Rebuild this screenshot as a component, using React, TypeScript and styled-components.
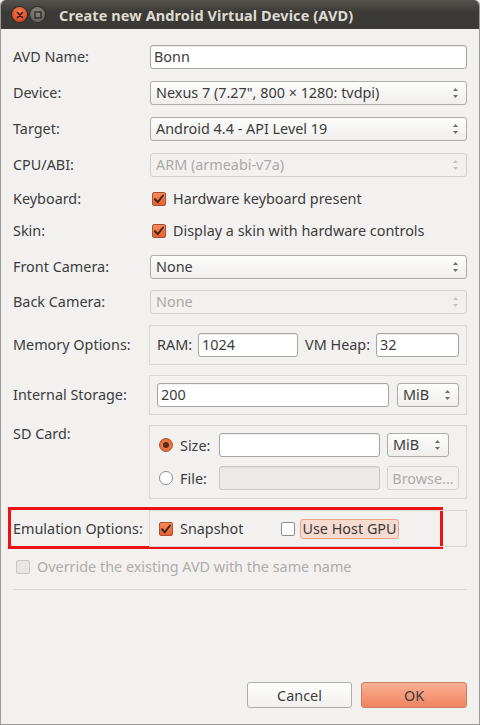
import React from "react";
import styled, { createGlobalStyle, css } from "styled-components";

const Global = createGlobalStyle`
  html, body { margin: 0; padding: 0; background: #f2f1f0; }
  body { font-family: "Noto Sans", "DejaVu Sans", sans-serif; font-size: 14.4px; color: #3c3c3c; }
  * { box-sizing: border-box; }
`;

const Window = styled.div`
  width: 480px;
  height: 725px;
  display: flex;
  flex-direction: column;
  background: #f2f1f0;
  border: 1px solid #9b9a96;
  border-top: none;
  border-radius: 5px 5px 0 0;
  overflow: hidden;
`;

const TitleBar = styled.div`
  height: 29px;
  flex: none;
  display: flex;
  align-items: center;
  padding-left: 11px;
  background: linear-gradient(#55534e, #3c3b37 40%, #3a3935);
  border-radius: 5px 5px 0 0;
`;

const WinButton = styled.div<{ $close?: boolean }>`
  width: 15px;
  height: 15px;
  border-radius: 50%;
  margin-right: 3px;
  display: flex;
  align-items: center;
  justify-content: center;
  ${(p) =>
    p.$close
      ? css`
          background: radial-gradient(circle at 50% 35%, #f7845e, #e0502a 60%, #c43f1c);
          box-shadow: 0 0 0 1px #2e2d2a;
        `
      : css`
          background: radial-gradient(circle at 50% 35%, #8a8882, #6c6a64 60%, #5d5b56);
          box-shadow: 0 0 0 1px #2e2d2a;
        `}
`;

const Title = styled.div`
  margin-left: 11px;
  color: #dfdbd2;
  font-weight: bold;
  font-size: 14.5px;
  letter-spacing: 0.1px;
`;

const Body = styled.div`
  flex: 1;
  display: flex;
  flex-direction: column;
  padding: 16px 12px 16px 12px;
`;

const Row = styled.div<{ $h: number; $mt?: number; $top?: boolean }>`
  display: grid;
  grid-template-columns: 136px 1fr;
  height: ${(p) => p.$h}px;
  margin-top: ${(p) => p.$mt ?? 0}px;
  align-items: ${(p) => (p.$top ? "start" : "center")};
`;

const Label = styled.div`
  line-height: 18px;
  white-space: nowrap;
`;

const Field = styled.div<{ $indent?: number }>`
  display: flex;
  align-items: center;
  height: 100%;
  padding-left: ${(p) => p.$indent ?? 0}px;
`;

const TextBox = styled.div<{ $w?: number; $disabled?: boolean; $ml?: number }>`
  height: 24px;
  ${(p) => (p.$w ? css`width: ${p.$w}px; flex: none;` : css`flex: 1;`)}
  margin-left: ${(p) => p.$ml ?? 0}px;
  border: 1px solid #a6a5a2;
  border-radius: 3px;
  background: ${(p) => (p.$disabled ? "#ebeae8" : "#ffffff")};
  ${(p) => p.$disabled && css`border-color: #c9c7c4;`}
  box-shadow: inset 0 1px 1px rgba(0, 0, 0, 0.06);
  padding: 0 4px 0 3px;
  display: flex;
  align-items: center;
  line-height: 18px;
  white-space: nowrap;
`;

const Combo = styled.div<{ $w?: number; $disabled?: boolean; $ml?: number }>`
  height: 24px;
  ${(p) => (p.$w ? css`width: ${p.$w}px; flex: none;` : css`flex: 1;`)}
  border: 1px solid ${(p) => (p.$disabled ? "#d3d1ce" : "#aeada9")};
  border-radius: 3px;
  background: ${(p) => (p.$disabled ? "#f2f1f0" : "linear-gradient(#fdfdfc, #efeeec)")};
  color: ${(p) => (p.$disabled ? "#aba9a6" : "#3c3c3c")};
  padding: 0 7px 0 5px;
  display: flex;
  align-items: center;
  justify-content: space-between;
  line-height: 18px;
  white-space: nowrap;
  margin-left: ${(p) => p.$ml ?? 1}px;
`;

const Group = styled.div<{ $gap?: number }>`
  border: 1px solid #dad8d4;
  height: 100%;
  padding: 0 7px;
  display: flex;
  align-items: center;
  gap: ${(p) => p.$gap ?? 6}px;
`;

const GroupGrid = styled.div`
  border: 1px solid #dad8d4;
  height: 100%;
  padding: 7px 7px 0 7px;
  display: grid;
  grid-template-columns: 54px 161px auto;
  grid-auto-rows: 24px;
  column-gap: 8px;
  row-gap: 9px;
  align-items: center;
`;

const Inline = styled.span<{ $ml?: number }>`
  white-space: nowrap;
  margin-left: ${(p) => p.$ml ?? 0}px;
  line-height: 18px;
`;

const CheckWrap = styled.label<{ $disabled?: boolean; $ml?: number }>`
  display: flex;
  align-items: center;
  gap: 7px;
  margin-left: ${(p) => p.$ml ?? 0}px;
  color: ${(p) => (p.$disabled ? "#aeaca9" : "#3c3c3c")};
  white-space: nowrap;
  line-height: 18px;
`;

const Box = styled.span<{ $checked?: boolean; $disabled?: boolean }>`
  width: 14px;
  height: 14px;
  flex: none;
  border-radius: 2px;
  display: inline-flex;
  align-items: center;
  justify-content: center;
  ${(p) =>
    p.$checked
      ? css`
          background: linear-gradient(#f58a5c, #e2622f);
          border: 1px solid #a9502c;
        `
      : p.$disabled
      ? css`
          background: #e8e7e5;
          border: 1px solid #c9c7c4;
        `
      : css`
          background: #ffffff;
          border: 1px solid #8e8c88;
        `}
`;

const Radio = styled.span<{ $checked?: boolean }>`
  width: 14px;
  height: 14px;
  flex: none;
  border-radius: 50%;
  display: inline-flex;
  align-items: center;
  justify-content: center;
  ${(p) =>
    p.$checked
      ? css`
          background: radial-gradient(circle, #f58a5c, #e0602e);
          border: 1px solid #b0532d;
        `
      : css`
          background: #ffffff;
          border: 1px solid #8e8c88;
        `}
`;

const Dot = styled.span`
  width: 6px;
  height: 6px;
  border-radius: 50%;
  background: #5a2a14;
`;

const RadioCell = styled.div`
  display: flex;
  align-items: center;
  gap: 7px;
  padding-left: 2px;
  white-space: nowrap;
`;

const FocusLabel = styled.span`
  border: 1px solid #eaa386;
  background: #f6dbd0;
  border-radius: 3px;
  padding: 0 1px;
  line-height: 18px;
  margin-left: -2px;
`;

const PushButton = styled.div<{ $w: number; $variant: "normal" | "primary" | "disabled"; $ml?: number }>`
  width: ${(p) => p.$w}px;
  height: ${(p) => (p.$variant === "disabled" ? 24 : 26)}px;
  flex: none;
  margin-left: ${(p) => p.$ml ?? 0}px;
  border-radius: 3px;
  display: flex;
  align-items: center;
  justify-content: center;
  white-space: nowrap;
  ${(p) =>
    p.$variant === "primary"
      ? css`
          background: linear-gradient(#fbb092, #f08462);
          border: 1px solid #c97f62;
        `
      : p.$variant === "disabled"
      ? css`
          background: #f2f1f0;
          border: 1px solid #d6d4d1;
          color: #aeaca9;
        `
      : css`
          background: linear-gradient(#ffffff, #f1f0ee);
          border: 1px solid #b0aeab;
        `}
`;

const Override = styled.div`
  margin-top: 9px;
  padding-left: 3px;
`;

const Separator = styled.div`
  margin-top: 13px;
  height: 1px;
  background: #d9d7d3;
`;

const Footer = styled.div`
  margin-top: auto;
  display: flex;
  justify-content: flex-end;
  gap: 9px;
`;

const Highlight = styled.div`
  margin-top: 8px;
  margin-left: -5px;
  margin-right: 24px;
  border: 3px solid #ee1111;
  height: 42px;
  padding: 0 0 0 2px;
  display: grid;
  grid-template-columns: 136px 1fr;
  align-items: center;
`;

const EmuGroup = styled.div`
  border: 1px solid #dad8d4;
  height: 37px;
  margin-right: -27px;
  display: flex;
  align-items: center;
  padding-left: 9px;
`;

const Check = () => (
  <svg width="12" height="12" viewBox="0 0 12 12">
    <path d="M2 6.2 L4.8 9.2 L10 2.5" fill="none" stroke="#4a2412" strokeWidth="2" strokeLinecap="round" strokeLinejoin="round" />
  </svg>
);

const Arrows = ({ disabled }: { disabled?: boolean }) => (
  <svg width="7" height="12" viewBox="0 0 7 12">
    <path d="M3.5 1 L6 4 L1 4 Z" fill={disabled ? "#c6c4c1" : "#6e6d6a"} />
    <path d="M3.5 11 L6 8 L1 8 Z" fill={disabled ? "#c6c4c1" : "#6e6d6a"} />
  </svg>
);

const CloseGlyph = () => (
  <svg width="8" height="8" viewBox="0 0 8 8">
    <path d="M1.5 1.5 L6.5 6.5 M6.5 1.5 L1.5 6.5" stroke="#3a1408" strokeWidth="1.6" strokeLinecap="round" />
  </svg>
);

const MinGlyph = () => (
  <svg width="8" height="8" viewBox="0 0 8 8">
    <rect x="1" y="1" width="6" height="6" fill="none" stroke="#2f2e2b" strokeWidth="1.4" />
  </svg>
);

export default function App() {
  return (
    <>
      <Global />
      <Window>
        <TitleBar>
          <WinButton $close>
            <CloseGlyph />
          </WinButton>
          <WinButton>
            <MinGlyph />
          </WinButton>
          <Title>Create new Android Virtual Device (AVD)</Title>
        </TitleBar>
        <Body>
          <Row $h={24}>
            <Label>AVD Name:</Label>
            <Field>
              <TextBox $ml={1}>Bonn</TextBox>
            </Field>
          </Row>
          <Row $h={24} $mt={12}>
            <Label>Device:</Label>
            <Field>
              <Combo>
                Nexus 7 (7.27", 800 × 1280: tvdpi)
                <Arrows />
              </Combo>
            </Field>
          </Row>
          <Row $h={24} $mt={12}>
            <Label>Target:</Label>
            <Field>
              <Combo>
                Android 4.4 - API Level 19
                <Arrows />
              </Combo>
            </Field>
          </Row>
          <Row $h={24} $mt={12}>
            <Label>CPU/ABI:</Label>
            <Field>
              <Combo $disabled>
                ARM (armeabi-v7a)
                <Arrows disabled />
              </Combo>
            </Field>
          </Row>
          <Row $h={22} $mt={11}>
            <Label>Keyboard:</Label>
            <Field $indent={3}>
              <CheckWrap>
                <Box $checked>
                  <Check />
                </Box>
                Hardware keyboard present
              </CheckWrap>
            </Field>
          </Row>
          <Row $h={22} $mt={10}>
            <Label>Skin:</Label>
            <Field $indent={3}>
              <CheckWrap>
                <Box $checked>
                  <Check />
                </Box>
                Display a skin with hardware controls
              </CheckWrap>
            </Field>
          </Row>
          <Row $h={24} $mt={13}>
            <Label>Front Camera:</Label>
            <Field>
              <Combo>
                None
                <Arrows />
              </Combo>
            </Field>
          </Row>
          <Row $h={24} $mt={11}>
            <Label>Back Camera:</Label>
            <Field>
              <Combo $disabled>
                None
                <Arrows disabled />
              </Combo>
            </Field>
          </Row>
          <Row $h={40} $mt={11}>
            <Label>Memory Options:</Label>
            <Group>
              <Inline>RAM:</Inline>
              <TextBox $w={100}>1024</TextBox>
              <Inline $ml={1}>VM Heap:</Inline>
              <TextBox>32</TextBox>
            </Group>
          </Row>
          <Row $h={40} $mt={10}>
            <Label>Internal Storage:</Label>
            <Group $gap={8}>
              <TextBox>200</TextBox>
              <Combo $w={62} $ml={0}>
                MiB
                <Arrows />
              </Combo>
            </Group>
          </Row>
          <Row $h={74} $mt={10} $top>
            <Label>SD Card:</Label>
            <GroupGrid>
              <RadioCell>
                <Radio $checked>
                  <Dot />
                </Radio>
                Size:
              </RadioCell>
              <TextBox />
              <Combo $w={62} $ml={-1}>
                MiB
                <Arrows />
              </Combo>
              <RadioCell>
                <Radio />
                File:
              </RadioCell>
              <TextBox $disabled />
              <PushButton $w={72} $variant="disabled" $ml={-1}>
                Browse...
              </PushButton>
            </GroupGrid>
          </Row>
          <Highlight>
            <Label>Emulation Options:</Label>
            <EmuGroup>
              <CheckWrap>
                <Box $checked>
                  <Check />
                </Box>
                Snapshot
              </CheckWrap>
              <CheckWrap $ml={38}>
                <Box />
                <FocusLabel>Use Host GPU</FocusLabel>
              </CheckWrap>
            </EmuGroup>
          </Highlight>
          <Override>
            <CheckWrap $disabled>
              <Box $disabled />
              Override the existing AVD with the same name
            </CheckWrap>
          </Override>
          <Separator />
          <Footer>
            <PushButton $w={105} $variant="normal">
              Cancel
            </PushButton>
            <PushButton $w={106} $variant="primary">
              OK
            </PushButton>
          </Footer>
        </Body>
      </Window>
    </>
  );
}
